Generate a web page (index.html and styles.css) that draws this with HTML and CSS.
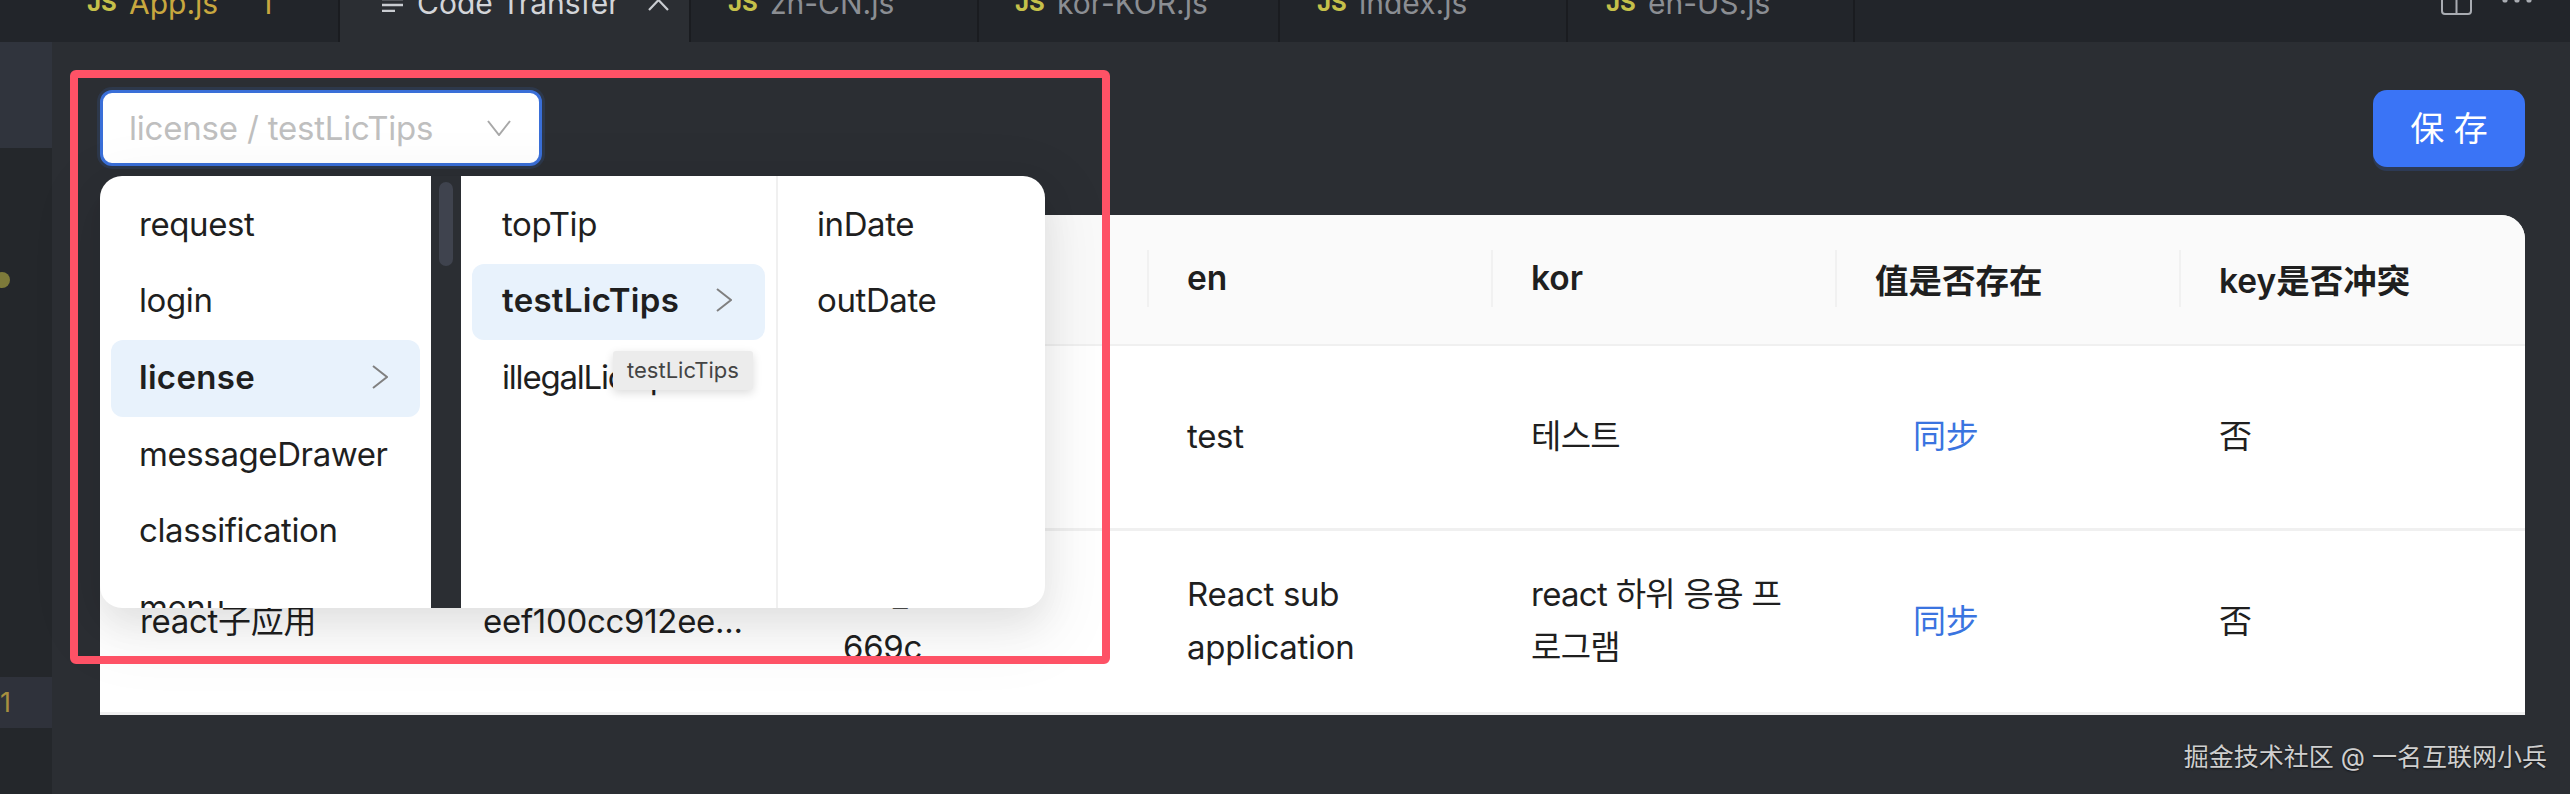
FILE: index.html
```html
<!DOCTYPE html>
<html>
<head>
    <meta charset="UTF-8">
    <title>Code Transfer</title>
    <link rel="stylesheet" href="styles.css">
</head>
<body>
    <div class="tabs">
        <div class="tab tab-app"><b class="js">JS</b><span class="tab-name">App.js</span><span class="tab-count">1</span></div>
        <div class="tab tab-active">
            <svg class="tab-lines" width="21" height="14" viewBox="0 0 21 14"><path d="M0 1h21M0 7h21M0 13h13" stroke="#c9ccd1" stroke-width="2.4" fill="none"/></svg>
            <span class="tab-name">Code Transfer</span>
            <svg class="tab-close" width="21" height="20" viewBox="0 0 21 20"><path d="M1 -2L20 18M20 -2L1 18" stroke="#c9ccd1" stroke-width="2.2" fill="none"/></svg>
        </div>
        <div class="tab tab-zh"><b class="js">JS</b><span class="tab-name">zh-CN.js</span></div>
        <div class="tab tab-kor"><b class="js">JS</b><span class="tab-name">kor-KOR.js</span></div>
        <div class="tab tab-index"><b class="js">JS</b><span class="tab-name">index.js</span></div>
        <div class="tab tab-en"><b class="js">JS</b><span class="tab-name">en-US.js</span></div>
        <div class="tab-actions">
            <svg width="31" height="15" viewBox="0 0 31 15"><path d="M1 0v11q0 3 3 3h23q3 0 3-3V0M15.500 0v14" stroke="#a9acb2" stroke-width="2" fill="none"/></svg>
            <svg width="30" height="4" viewBox="0 0 30 4"><circle cx="3" cy="0" r="2.600" fill="#a9acb2"/><circle cx="15" cy="0" r="2.600" fill="#a9acb2"/><circle cx="27" cy="0" r="2.600" fill="#a9acb2"/></svg>
        </div>
    </div>

    <div class="layout">
        <div class="side">
            <div class="side-top"></div>
            <div class="side-dot"></div>
            <div class="side-num">1</div>
        </div>

        <div class="main">
            <div class="toolbar">
                <div class="cascader">
                    <div class="select">
                        <span class="select-text">license / testLicTips</span>
                        <svg width="24" height="16" viewBox="0 0 24 16"><path d="M1 1l11 14L23 1" stroke="#a8a8a8" stroke-width="2" fill="none"/></svg>
                    </div>
                    <div class="dropdown">
                        <ul class="menu menu-1">
                            <li>request</li>
                            <li>login</li>
                            <li class="on">license
                                <svg width="16" height="24" viewBox="0 0 16 24"><path d="M1 1l14 11L1 23" stroke="#808080" stroke-width="2" fill="none"/></svg>
                            </li>
                            <li>messageDrawer</li>
                            <li>classification</li>
                            <li>menu</li>
                        </ul>
                        <div class="scroll"><div class="scroll-thumb"></div></div>
                        <ul class="menu menu-2">
                            <li>topTip</li>
                            <li class="on">testLicTips
                                <svg width="16" height="24" viewBox="0 0 16 24"><path d="M1 1l14 11L1 23" stroke="#808080" stroke-width="2" fill="none"/></svg>
                            </li>
                            <li class="narrow">illegalLicTips</li>
                        </ul>
                        <ul class="menu menu-3">
                            <li>inDate</li>
                            <li>outDate</li>
                        </ul>
                        <div class="tip">testLicTips</div>
                    </div>
                </div>
                <button class="save">保 存</button>
            </div>

            <div class="table-box">
                <table class="table">
                    <colgroup>
                        <col class="col-a">
                        <col class="col-b">
                        <col class="col-c">
                        <col class="col-c">
                        <col class="col-c">
                        <col class="col-c">
                        <col>
                    </colgroup>
                    <thead>
                        <tr>
                            <th></th>
                            <th></th>
                            <th></th>
                            <th class="sep">en</th>
                            <th class="sep">kor</th>
                            <th class="sep">值是否存在</th>
                            <th class="sep">key是否冲突</th>
                        </tr>
                    </thead>
                    <tbody>
                        <tr>
                            <td></td>
                            <td></td>
                            <td></td>
                            <td>test</td>
                            <td lang="ko">테스트</td>
                            <td><a class="sync" href="javascript:;">同步</a></td>
                            <td>否</td>
                        </tr>
                        <tr>
                            <td>react子应用</td>
                            <td>eef100cc912ee...</td>
                            <td>a3f_b27e90.<br>669c</td>
                            <td>React sub application</td>
                            <td lang="ko">react 하위 응용 프로그램</td>
                            <td><a class="sync" href="javascript:;">同步</a></td>
                            <td>否</td>
                        </tr>
                    </tbody>
                </table>
            </div>
        </div>
    </div>

    <div class="mark"></div>
    <div class="watermark">掘金技术社区 @ 一名互联网小兵</div>
</body>
</html>
```

FILE: styles.css
```css
* {
    margin: 0;
    padding: 0;
    box-sizing: border-box;
    list-style: none;
}
html,
body {
    height: 794px;
    overflow: hidden;
}
body {
    position: relative;
    background-color: #2b2e33;
    font-family: Inter, "Noto Sans CJK SC", sans-serif;
    font-size: 33px;
    letter-spacing: -.4px;
    color: #1f1f1f;
}

/* tab bar, cut off at the top of the shot */
.tabs {
    display: flex;
    height: 42px;
    overflow: hidden;
    background-color: #22252a;
}
.tab {
    display: flex;
    align-items: flex-end;
    height: 42px;
    padding-bottom: 24px;
    border-right: 2px solid #1a1c20;
    font-size: 30px;
    line-height: 30px;
    letter-spacing: 0;
    white-space: nowrap;
    color: #8b8e93;
}
.tab-app {
    width: 340px;
    padding-left: 87px;
    color: #c8a83f;
}
.tab-active {
    width: 351px;
    padding-left: 42px;
    background-color: #2b2e33;
    color: #d3d5d9;
}
.tab-zh {
    width: 288px;
    padding-left: 37px;
}
.tab-kor {
    width: 301px;
    padding-left: 36px;
}
.tab-index {
    width: 288px;
    padding-left: 37px;
}
.tab-en {
    width: 287px;
    padding-left: 38px;
}
.js {
    width: 42px;
    font-size: 24px;
    font-weight: 700;
    color: #c5c04a;
}
.tab-count {
    margin-left: 42px;
}
.tab-lines {
    align-self: flex-start;
    margin-right: 14px;
    margin-top: -2px;
}
.tab-close {
    align-self: flex-start;
    margin-left: 28px;
    margin-top: -8px;
}
.tab-actions {
    flex: 1;
    display: flex;
    justify-content: flex-end;
    align-items: flex-start;
    gap: 30px;
    padding-right: 38px;
}

.layout {
    display: flex;
    height: 752px;
}
.side {
    width: 52px;
    background-color: #24272b;
}
.side-top {
    height: 106px;
    background-color: #30343d;
}
.side-dot {
    width: 16px;
    height: 16px;
    margin: 124px 0 0 -6px;
    border-radius: 50%;
    background-color: #7d7a3a;
}
.side-num {
    height: 51px;
    margin-top: 389px;
    background-color: #2f323b;
    font-size: 27px;
    line-height: 51px;
    color: #a88f3f;
}
.main {
    flex: 1;
    padding: 48px 45px 0 48px;
}

.toolbar {
    display: flex;
    justify-content: space-between;
    height: 76px;
}
.cascader {
    position: relative;
    width: 442px;
}
.select {
    display: flex;
    justify-content: space-between;
    align-items: center;
    height: 76px;
    padding: 0 28px 0 26px;
    border: 3px solid #3a6fd8;
    border-radius: 12px;
    box-shadow: 0 0 0 3px rgba(58, 111, 216, .15);
    background-color: #fff;
    letter-spacing: -.2px;
    color: #bfbfbf;
}
.dropdown {
    position: absolute;
    top: 86px;
    left: 0;
    z-index: 5;
    display: flex;
    width: 945px;
    height: 432px;
    border-radius: 22px;
    background-color: #fff;
    box-shadow: 0 14px 36px rgba(0, 0, 0, .08), 0 20px 64px 18px rgba(0, 0, 0, .05);
}
.menu {
    height: 432px;
    padding: 11px;
    overflow: hidden;
}
.menu li {
    display: flex;
    justify-content: space-between;
    align-items: center;
    height: 76.67px;
    padding: 0 32px 3px 28px;
    border-radius: 12px;
    white-space: nowrap;
}
.menu .on {
    background-color: #e8f2fc;
    font-weight: 600;
    letter-spacing: .3px;
}
.menu-1 {
    width: 331px;
    border-radius: 22px 0 0 22px;
}
.scroll {
    width: 30px;
    padding: 6px 8px;
    background-color: #2b2e33;
}
.scroll-thumb {
    height: 84px;
    border-radius: 8px;
    background-color: #3f434e;
}
.menu-2 {
    width: 317px;
    border-right: 2px solid #f0f0f0;
}
.menu-2 li {
    padding-right: 33px;
    padding-left: 30px;
}
.menu-2 .narrow {
    letter-spacing: -1.2px;
}
.menu-3 {
    flex: 1;
}
.menu-3 li {
    padding-left: 28px;
}
.tip {
    position: absolute;
    top: 175px;
    left: 513px;
    width: 140px;
    height: 39px;
    border-radius: 3px;
    background-color: #ececec;
    box-shadow: 0 3px 10px rgba(0, 0, 0, .14);
    font-size: 22px;
    line-height: 39px;
    letter-spacing: 0;
    text-align: center;
    color: #444;
}
.save {
    width: 152px;
    height: 77px;
    padding-bottom: 4px;
    border: 0;
    border-radius: 14px;
    background-color: #3a74f6;
    box-shadow: 0 4px 0 rgba(58, 116, 246, .18);
    font-family: inherit;
    font-size: 34px;
    color: #fff;
}

.table-box {
    height: 500px;
    margin-top: 49px;
    overflow: hidden;
    border-radius: 24px 24px 0 0;
    background-color: #fff;
}
.table {
    width: 100%;
    table-layout: fixed;
    border-collapse: collapse;
}
.col-a {
    width: 343px;
}
.col-b {
    width: 360px;
}
.col-c {
    width: 344px;
}
.table th {
    position: relative;
    height: 130px;
    padding: 0 40px 3px;
    border-bottom: 2px solid #f0f0f0;
    background-color: #fafafa;
    font-size: 33.500px;
    font-weight: 600;
    letter-spacing: 0;
    text-align: left;
}
.table .sep::before {
    content: "";
    position: absolute;
    top: 35px;
    left: 0;
    width: 2px;
    height: 57px;
    background-color: #f1f1f1;
}
.table td {
    height: 184px;
    padding: 0 40px;
    border-bottom: 3px solid #f0f0f0;
    line-height: 53px;
    letter-spacing: -.3px;
}
.table td[lang="ko"] {
    font-family: Inter, "Noto Sans CJK KR", sans-serif;
    letter-spacing: -.7px;
}
.sync {
    padding-left: 38px;
    text-decoration: none;
    color: #3a74e0;
}

/* red annotation box over the screenshot */
.mark {
    position: absolute;
    top: 70px;
    left: 70px;
    z-index: 9;
    width: 1040px;
    height: 594px;
    border: 8px solid #fe5266;
    border-radius: 6px;
}
.watermark {
    position: absolute;
    right: 23px;
    bottom: 21px;
    font-size: 25px;
    letter-spacing: 0;
    color: #cfcfcf;
    text-shadow: 0 1px 2px rgba(0, 0, 0, .6);
}
```
